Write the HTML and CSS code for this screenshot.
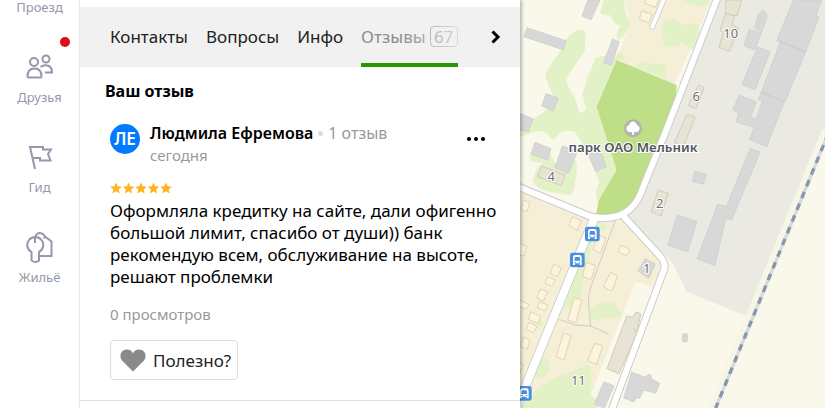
FILE: index.html
```html
<!DOCTYPE html>
<html lang="ru">
<head>
    <meta charset="UTF-8">
    <meta name="viewport" content="width=device-width, initial-scale=1.0">
    <title>Отзывы</title>
    <link rel="stylesheet" href="styles.css">
</head>
<body>

<div class="page">
    <nav class="sidebar">
        <a href="#" class="side-link"><span>Проезд</span></a>
        <a href="#" class="side-link">
            <i class="dot"></i>
            <svg width="28" height="28" viewBox="0 0 28 28">
                <circle cx="8" cy="9" r="4"/>
                <circle cx="20" cy="6" r="3.5"/>
                <path d="M1.5 23.5c0-5.500 2.500-8 7-8s7 2.500 7 8q0 1-1 1h-12q-1 0-1-1z"/>
                <path d="M14.500 14c1.500-1.300 3-1.800 5-1.800 4 0 6.500 2.300 6.500 7.300h-7"/>
            </svg>
            <span>Друзья</span>
        </a>
        <a href="#" class="side-link">
            <svg width="28" height="28" viewBox="0 0 28 28">
                <path d="M9 26L4 4h13v2.500h8L22 11l2.500 6.500H14V15H6.500"/>
            </svg>
            <span>Гид</span>
        </a>
        <a href="#" class="side-link">
            <svg class="tall" width="28" height="34" viewBox="0 0 28 34">
                <path d="M5.500 22a8 8 0 1 1 7.500 0v8.500q-3.500 3-7.500 0zM9 7v6"/>
                <path d="M9.500 6a5 5 0 0 1 9.500 1.500M18 8.500l1-2 6.500 5v14.500H13"/>
            </svg>
            <span>Жильё</span>
        </a>
    </nav>

    <main class="panel">
        <div class="tabs">
            <a href="#" class="tab">Контакты</a>
            <a href="#" class="tab">Вопросы</a>
            <a href="#" class="tab">Инфо</a>
            <a href="#" class="tab active">Отзывы <span class="count">67</span></a>
            <button type="button" class="next" aria-label="Дальше">
                <svg width="10" height="14" viewBox="0 0 10 14"><path d="M1.500 1.500L7 7l-5.500 5.500"/></svg>
            </button>
        </div>

        <h2 class="title">Ваш отзыв</h2>

        <article class="review">
            <header class="author">
                <div class="avatar">ЛЕ</div>
                <div class="author-info">
                    <div class="author-name"><b>Людмила Ефремова</b><i class="separator"></i><span>1 отзыв</span></div>
                    <div class="date">сегодня</div>
                </div>
                <button type="button" class="more" aria-label="Ещё">
                    <svg width="20" height="4" viewBox="0 0 20 4"><circle cx="3" cy="2" r="2"/><circle cx="10" cy="2" r="2"/><circle cx="17" cy="2" r="2"/></svg>
                </button>
            </header>
            <svg class="stars" width="63" height="12" viewBox="0 0 63 12">
                <defs>
                    <path id="star" d="M6 .500l1.700 3.800 4 .4-3 2.700.9 4L6 9.300l-3.600 2.100.9-4-3-2.700 4-.4z"/>
                </defs>
                <use href="#star"/>
                <use href="#star" x="12.500"/>
                <use href="#star" x="25"/>
                <use href="#star" x="37.500"/>
                <use href="#star" x="50"/>
            </svg>
            <p class="text">Оформляла кредитку на сайте, дали офигенно большой лимит, спасибо от души)) банк рекомендую всем, обслуживание на высоте, решают проблемки</p>
            <div class="views">0 просмотров</div>
            <button type="button" class="useful">
                <svg width="26" height="23" viewBox="0 0 26 23"><path d="M13 22.500L2.500 12C-1.500 8 .5.500 7 .500c3 0 5 1.500 6 4 1-2.500 3-4 6-4 6.500 0 8.500 7.500 4.500 11.500z"/></svg>
                Полезно?
            </button>
        </article>
    </main>

    <section class="map">
        <svg viewBox="15 0 915 1224" preserveAspectRatio="xMinYMin slice">
            <defs>
                <g id="bus">
                    <rect class="bus-bg" x="-22" y="-22" width="44" height="44" rx="7"/>
                    <path class="bus-body" d="M-13 15V-8q0-7 7-7H6q7 0 7 7v23H7V10H-7v5z"/>
                    <path class="bus-bg" d="M-7-9H7l2 11H-9zM-9 5h4v3h-4zM5 5h4v3H5z"/>
                </g>
            </defs>

            <!-- land -->
            <path class="living" d="M328 0L345 70 305 180 480 252 590 0zM0 560L240 650 325 645 450 790 422 864 362 845 225 1190 240 1224H0z"/>
            <path class="industry" d="M605 0H930V392L698 950 515 875 470 785 325 640 385 565z"/>
            <path class="grass" d="M155 115Q175 92 200 88 218 92 210 115V150L155 235Q153 255 178 290L192 335Q200 342 214 325 202 295 203 275 212 262 215 235 230 210 240 175L275 165 300 175 312 152Q325 160 328 178L305 180 400 420 340 615H250Q235 580 252 545 235 490 215 450 195 420 180 395 155 388 135 398L118 420Q105 422 98 400 70 385 40 402L15 412V370Q90 355 118 290 90 240 92 222 105 190 125 170 145 140 155 115z"/>
            <path class="grass" d="M265 0L255 38Q270 50 285 45 300 80 318 75 295 110 310 118 325 120 345 70 325 30 328 0z"/>
            <path class="grass" d="M50 455Q35 480 55 485L85 488Q60 505 53 540 60 565 100 575L160 585Q180 580 180 545 190 500 182 480L120 490 105 460z"/>
            <path class="grass" d="M360 198Q375 182 400 188 425 195 445 190 460 200 448 235zM450 60Q480 50 500 75 530 65 550 75 558 100 545 125 550 155 525 145L500 128Q480 145 450 140 435 115 450 100 430 80 450 60zM500 0Q530 15 560 20 578 25 580 0zM520 205Q540 190 538 220 520 225 520 205z"/>
            <path class="grass" d="M195 710Q225 660 250 665 280 670 275 690 250 685 235 710L195 900Q165 925 145 930 150 900 165 870 140 840 160 815zM225 935Q240 905 270 908 300 900 312 930 335 950 300 955 270 945 245 962 225 965 225 935zM62 1135Q60 1100 80 1075 105 1075 102 1100 105 1130 62 1140zM25 1224Q50 1160 140 1125 190 1110 200 1100 215 1090 232 1105 220 1130 232 1150 215 1180 240 1195L250 1224zM62 960Q85 955 82 975 70 990 62 980z"/>
            <path class="park" d="M305 180L485 255 480 322 385 565 320 645 240 655 252 600 305 510 245 320z"/>
            <path class="trail" d="M303 655L250 800Q218 880 220 900L227 980M132 958L180 975 227 978 280 1001"/>

            <!-- roads -->
            <g class="road-edge">
                <path d="M608-8L450 400 385 560Q360 640 295 651 250 660 215 645L0 556"/>
                <path class="wide" d="M238 655L185 782 5 1224"/>
                <path d="M322 645L432 765Q456 790 446 812L290 1230"/>
                <path class="narrow" d="M449-8L412 80"/>
            </g>
            <g class="road">
                <path d="M608-8L450 400 385 560Q360 640 295 651 250 660 215 645L0 556"/>
                <path class="wide" d="M238 655L185 782 5 1224"/>
                <path d="M322 645L432 765Q456 790 446 812L290 1230"/>
                <path class="narrow" d="M449-8L412 80"/>
            </g>
            <path class="rail-side" d="M928 390L586 1224"/>
            <path class="rail" d="M940 400L602 1224"/>
            <path class="rail-dash" d="M940 400L602 1224"/>

            <!-- buildings -->
            <path class="house" d="M218 0H255L228 60 201 48zM36 83L153 122 146 150 27 110zM292 117L313 125 289 197 266 188zM93 281L130 294 115 333 80 318zM15 340L55 357 40 396 15 390zM60 427L108 446 97 481 48 462zM142 438L188 452 160 520 120 503zM217 458L258 456 274 500 242 515zM390 776L421 792 401 836 369 813z"/>
            <path class="house" d="M718 85L728 50Q738 28 748 34 758 40 755 55L720 149 686 137 703 88 737 99M728 141L765 156 720 270 681 253zM835 0H920L903 48 912 52 872 156 785 122zM797 123L872 156 810 306 738 278zM740 275L808 305 755 440 702 418 718 383 663 365 671 340 653 330 673 285 724 306 707 350 722 358 742 305 730 298zM706 445L735 457 650 660 632 655 600 797 546 776 608 612 634 619zM540 513L575 524 565 553 532 543zM487 645L546 665 518 755 458 736z"/>
            <path class="house" d="M267 1145L297 1158 268 1224 237 1213zM350 1116L387 1130 395 1132 400 1122 409 1127 408 1135 434 1150 422 1180 386 1170 374 1195 362 1193 357 1206 326 1194z"/>
            <rect class="house" x="502" y="1001" width="16" height="25" rx="5"/>
            <path class="beige" d="M335 948L353 952 363 936 377 941 367 993 359 988 365 1000 312 1121 276 1106zM632 0H680L666 48 632 40zM632 40L658 48 651 75 671 84 643 154 612 142 625 96 615 92zM551 255L567 263 543 326 519 317zM516 342L540 352 506 438 478 428zM80 498L149 525 140 557 68 530zM430 570L460 580 438 648 408 635z"/>
            <path class="hut" d="M395-5H432L422 22 390 10zM380 33L411 42 402 69 373 58zM172 650L199 662 187 691 162 678zM250 705L273 715 256 760 234 748zM214 788L242 796 228 840 202 828zM287 817L308 828 291 873 265 860zM319 735L345 750 334 767 309 755zM178 893L201 900 182 968 158 960zM145 1000L168 1006 147 1080 123 1070zM239 1030L263 1037 245 1094 218 1082zM115 793L139 804 128 830 106 820zM98 830L121 840 112 859 90 850zM76 867L97 875 86 903 66 893zM74 905L99 915 90 932 66 922zM48 935L78 950 70 970 40 958zM42 966L66 980 56 998 32 988zM25 1012L45 1020 36 1048 17 1040zM12 730L35 738 28 768 12 765zM25 600L45 608 36 635 17 628zM12 900L42 912 35 928 12 920zM12 1088L25 1093 16 1117z"/>

            <!-- marks -->
            <use href="#bus" x="232" y="702"/>
            <use href="#bus" x="187" y="780"/>
            <use href="#bus" x="28" y="1180"/>
            <circle class="tree-bg" cx="354" cy="385" r="27"/>
            <path class="tree" d="M351 404V396Q335 399 334 384 335 376 342 376 343 368 354 364 365 368 366 376 373 376 374 384 373 399 357 396V404z"/>
            <text class="place" x="354" y="455">парк ОАО Мельник</text>
            <g class="number">
                <text x="109" y="543">4</text>
                <text x="647" y="114">10</text>
                <text x="544" y="304">6</text>
                <text x="434" y="624">2</text>
                <text x="395" y="820">1</text>
                <text x="190" y="1155">11</text>
            </g>
        </svg>
    </section>
</div>

</body>
</html>
```
FILE: styles.css
```css
body {
    margin: 0;
    font-family: "Noto Sans", "Open Sans", sans-serif;
    font-size: 17px;
    color: #000;
    background-color: white;
}
a {
    color: inherit;
    text-decoration: none;
}
button {
    font: inherit;
    color: inherit;
    background: none;
    border: none;
    padding: 0;
    cursor: pointer;
}
.page {
    display: flex;
    height: 100vh;
    overflow: hidden;
}
.sidebar {
    display: flex;
    flex-direction: column;
    width: 79px;
    flex-shrink: 0;
    border-right: 1px solid #ebebeb;
    font-size: 13px;
    line-height: 14px;
    color: #9598ab;
}
.side-link {
    position: relative;
    display: flex;
    flex-direction: column;
    align-items: center;
    gap: 9px;
    margin-bottom: 39px;
}
.side-link svg {
    fill: none;
    stroke: #9598ab;
    stroke-width: 2;
}
.side-link .tall {
    margin: -3px 0;
}
.dot {
    position: absolute;
    top: -16px;
    right: 9px;
    width: 10px;
    height: 10px;
    border-radius: 50%;
    background-color: #e30b13;
}
.panel {
    position: relative;
    width: 440px;
    flex-shrink: 0;
    padding-top: 7px;
    box-sizing: border-box;
    box-shadow: 2px 0 3px rgba(0, 0, 0, 0.25);
    z-index: 1;
}
.tabs {
    position: relative;
    display: flex;
    gap: 18px;
    height: 60px;
    padding-left: 30px;
    background-color: #f1f1f1;
    color: #222;
    overflow: hidden;
}
/* fades the tabs out under the arrow */
.tabs::after {
    content: "";
    position: absolute;
    top: 0;
    right: 40px;
    width: 80px;
    height: 56px;
    background: linear-gradient(to right, rgba(241, 241, 241, 0), #f1f1f1);
    pointer-events: none;
}
.tab {
    line-height: 60px;
    white-space: nowrap;
}
.active {
    box-sizing: border-box;
    height: 60px;
    color: #8c8c8c;
    border-bottom: 4px solid #2a9600;
}
.count {
    display: inline-block;
    padding: 0 3px;
    border: 1px solid #999;
    border-radius: 4px;
    line-height: 19px;
}
.next {
    display: flex;
    align-items: center;
    margin: 0 19px 0 auto;
}
.next svg {
    fill: none;
    stroke: #000;
    stroke-width: 3;
}
.title {
    margin: 13px 0 0 25px;
    font-size: 16px;
    line-height: 22px;
    font-weight: 700;
}
.review {
    padding: 20px 30px;
    border-bottom: 1px solid #e0e0e0;
}
.author {
    display: flex;
    gap: 10px;
}
.avatar {
    width: 30px;
    height: 30px;
    margin-top: 2px;
    border-radius: 50%;
    background-color: #007aff;
    color: white;
    font-weight: 600;
    line-height: 30px;
    text-align: center;
}
.author-info {
    flex: 1;
    line-height: 22px;
    color: #999;
}
.author-name {
    display: flex;
    align-items: center;
    font-size: 16px;
}
.author-name b {
    font-weight: 600;
    color: #000;
}
.separator {
    width: 5px;
    height: 5px;
    margin: 0 5px;
    border-radius: 50%;
    background-color: #ddd;
}
.date {
    font-size: 15px;
}
.more {
    display: flex;
    align-items: center;
    height: 34px;
    margin-right: 4px;
}
.stars {
    display: block;
    margin-top: 16px;
    fill: #ffb321;
}
.text {
    margin: 6px -10px 0 0;
    line-height: 22px;
}
.views {
    margin-top: 16px;
    font-size: 15px;
    line-height: 20px;
    color: #999;
}
.useful {
    display: flex;
    align-items: center;
    gap: 7px;
    height: 40px;
    margin-top: 16px;
    padding: 0 6px 0 9px;
    border: 1px solid #ddd;
    border-radius: 4px;
    color: #222;
}
.useful svg {
    fill: #8a8a8a;
}
.map {
    flex: 1;
    background-color: #faf8ea;
}
.map svg {
    display: block;
    width: 100%;
    height: 100%;
}
.living { fill: #f5efd8; }
.industry { fill: #eaeae3; }
.grass { fill: #e3f1c6; }
.park { fill: #bede87; }
.trail {
    fill: none;
    stroke: #cfcdc2;
    stroke-width: 3;
}
.road, .road-edge {
    fill: none;
    stroke: #fff;
    stroke-width: 18;
    stroke-linecap: round;
}
.road-edge {
    stroke: #ccc;
    stroke-width: 24;
}
.road .wide { stroke-width: 24; }
.road-edge .wide { stroke-width: 29; }
.road .narrow { stroke-width: 12; }
.road-edge .narrow { stroke-width: 17; }
.rail, .rail-dash, .rail-side {
    fill: none;
    stroke: #d9d9dc;
    stroke-width: 10;
}
.rail-side {
    stroke: #f7f6e6;
    stroke-width: 14;
}
.rail-dash {
    stroke: #8797ae;
    stroke-dasharray: 20 18;
}
.house {
    fill: #d8d8d8;
    stroke: #cacaca;
    stroke-width: 2;
}
.beige {
    fill: #e7e3d5;
    stroke: #d3ccb7;
    stroke-width: 3;
}
.hut {
    fill: #fdf4de;
    stroke: #e2d3b4;
    stroke-width: 3;
}
.bus-bg { fill: #4a90e2; }
.bus-body { fill: #fff; }
.tree-bg { fill: #b3b3b0; }
.tree { fill: #fff; }
.place, .number {
    font-size: 39px;
    text-anchor: middle;
    fill: #707070;
    stroke: #fff;
    stroke-width: 6;
    paint-order: stroke;
}
.place {
    font-size: 40px;
    font-weight: 600;
    fill: #54565e;
}
```
